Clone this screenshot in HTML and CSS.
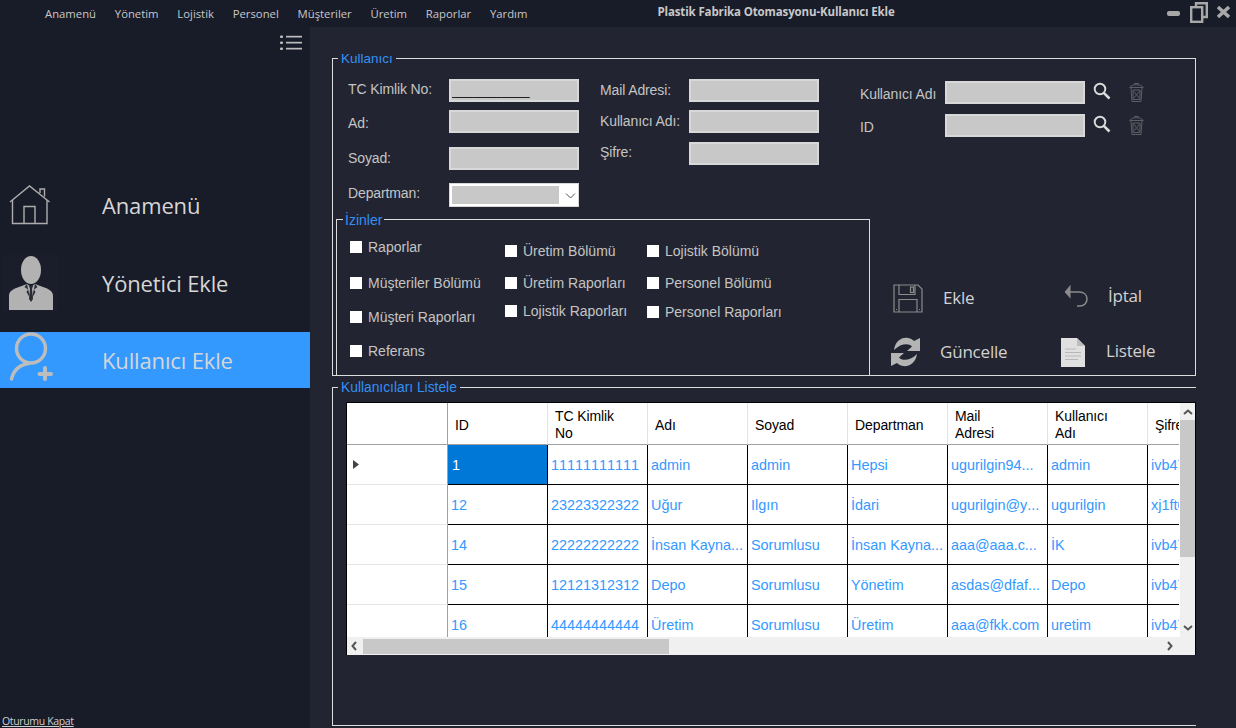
FILE: index.html
```html
<!DOCTYPE html>
<html lang="tr">
<head>
<meta charset="utf-8">
<title>Plastik Fabrika Otomasyonu-Kullanıcı Ekle</title>
<link rel="stylesheet" href="styles.css">
</head>
<body>
<div class="app">
  <header class="topbar">
    <nav class="menu">
      <span>Anamenü</span><span>Yönetim</span><span>Lojistik</span><span>Personel</span><span>Müşteriler</span><span>Üretim</span><span>Raporlar</span><span>Yardım</span>
    </nav>
    <div class="title">Plastik Fabrika Otomasyonu-Kullanıcı Ekle</div>
    <div class="win-controls">
      <svg width="13" height="5" viewBox="0 0 13 5"><rect x="0" y="0" width="13" height="5" rx="2" fill="#a8a8a8"/></svg>
      <svg class="win-restore" width="18" height="21" viewBox="0 0 18 21" fill="none" stroke="#a8a8a8" stroke-width="2.4"><path d="M6 4V1.2H16.8V15H12.5"/><rect x="1.2" y="5.2" width="11" height="14.6"/></svg>
      <svg class="win-close" width="13" height="12" viewBox="0 0 13 12" stroke="#a8a8a8" stroke-width="3.4"><path d="M1 1L12 11M12 1L1 11"/></svg>
    </div>
  </header>
  <div class="body-row">
    <aside class="sidebar">
      <div class="side-top">
        <svg width="22" height="15" viewBox="0 0 22 15" fill="#bdbdbd"><rect x="0" y="0.5" width="3" height="2.5" rx="1"/><rect x="6" y="0.8" width="16" height="1.7"/><rect x="0" y="6.5" width="3" height="2.5" rx="1"/><rect x="6" y="6.8" width="16" height="1.7"/><rect x="0" y="12.5" width="3" height="2.5" rx="1"/><rect x="6" y="12.8" width="16" height="1.7"/></svg>
      </div>
      <nav class="side-nav">
        <a class="side-item">
          <span class="side-icon">
            <svg class="ico-home" width="42" height="40" viewBox="0 0 42 40" fill="none" stroke="#adadad" stroke-width="1.4"><path d="M1 17L20.5 1L40.5 17"/><path d="M3.5 15V38.5H38V15"/><path d="M15 38.5V21.5H26V38.5"/><path d="M31 8V4H35.5V11.5"/></svg>
          </span>
          <span class="side-label">Anamenü</span>
        </a>
        <a class="side-item item-manager">
          <span class="side-icon">
            <svg class="ico-man" width="56" height="56" viewBox="0 0 56 56"><rect width="56" height="56" fill="#1b1e2a"/><ellipse cx="28" cy="15" rx="10" ry="14" fill="#b2b2b2"/><path d="M6 55V41C6 36 10 34 16 32L24 29L28 32L32 29L40 32C46 34 50 36 50 41V55Z" fill="#b2b2b2"/><path d="M24 29L27 43L23.5 37L25 34.5L21.5 32ZM32 29L29 43L32.5 37L31 34.5L34.5 32Z" fill="#2a2c35"/><path d="M26 31H30L29 34L30 44L28 47L26 44L27 34Z" fill="#2a2c35"/></svg>
          </span>
          <span class="side-label">Yönetici Ekle</span>
        </a>
        <a class="side-item active">
          <span class="side-icon">
            <svg class="ico-add" width="56" height="56" viewBox="0 0 56 56" fill="none" stroke="#bdbdbd" stroke-linecap="round"><circle cx="31" cy="16.500" r="14.500" stroke-width="3.400"/><path d="M11.500 47C14 37 20 32.500 29 31.500" stroke-width="3.400"/><path d="M45 36V47M39.500 42H51" stroke-width="4"/></svg>
          </span>
          <span class="side-label">Kullanıcı Ekle</span>
        </a>
      </nav>
      <a class="logout">Oturumu Kapat</a>
    </aside>
    <main class="main">
      <fieldset class="box box-user">
        <legend>Kullanıcı</legend>
        <div class="form-top">
          <div class="col col-a">
            <div class="field"><label class="lbl lbl-a up1">TC Kimlik No:</label><input class="inp" value="___________"></div>
            <div class="field f-8"><label class="lbl lbl-a down1">Ad:</label><input class="inp"></div>
            <div class="field f-14"><label class="lbl lbl-a up-s">Soyad:</label><input class="inp"></div>
            <div class="field f-13 field-select"><label class="lbl lbl-a up3">Departman:</label>
              <div class="combo"><span class="combo-fill"></span><svg width="11" height="6" viewBox="0 0 11 6" fill="none" stroke="#555" stroke-width="1"><path d="M1 .5L5.500 5L10 .5"/></svg></div>
            </div>
          </div>
          <div class="col col-b">
            <div class="field"><label class="lbl lbl-b up-s">Mail Adresi:</label><input class="inp"></div>
            <div class="field f-8"><label class="lbl lbl-b up-xs">Kullanıcı Adı:</label><input class="inp"></div>
            <div class="field f-9"><label class="lbl lbl-b up2">Şifre:</label><input class="inp"></div>
          </div>
          <div class="col col-c">
            <div class="field"><label class="lbl lbl-c">Kullanıcı Adı</label><input class="inp inp-wide">
              <svg class="ico-search" width="18" height="18" viewBox="0 0 18 18" fill="none" stroke="#dcdcdc"><circle cx="7" cy="7" r="5.300" stroke-width="1.900"/><path d="M10.800 10.800L16.500 16.500" stroke-width="2.600"/></svg>
              <svg class="ico-trash" width="15" height="19" viewBox="0 0 15 19" fill="none" stroke="#5c5e66"><path d="M.5 4.500H14.500M1.500 4C2 1 13 1 13.500 4"/><path d="M5.500 1.500V.5H9.500V1.500"/><path d="M2 5L3 18.500H12L13 5"/><path d="M4.500 8L10.500 15.500M10.500 8L4.500 15.500M4 7H11V16.500H4Z"/></svg>
            </div>
            <div class="field f-10"><label class="lbl lbl-c">ID</label><input class="inp inp-wide">
              <svg class="ico-search" width="18" height="18" viewBox="0 0 18 18" fill="none" stroke="#dcdcdc"><circle cx="7" cy="7" r="5.300" stroke-width="1.900"/><path d="M10.800 10.800L16.500 16.500" stroke-width="2.600"/></svg>
              <svg class="ico-trash" width="15" height="19" viewBox="0 0 15 19" fill="none" stroke="#5c5e66"><path d="M.5 4.500H14.500M1.500 4C2 1 13 1 13.500 4"/><path d="M5.500 1.500V.5H9.500V1.500"/><path d="M2 5L3 18.500H12L13 5"/><path d="M4.500 8L10.500 15.500M10.500 8L4.500 15.500M4 7H11V16.500H4Z"/></svg>
            </div>
          </div>
        </div>
        <div class="form-bottom">
          <fieldset class="box box-perm">
            <legend>İzinler</legend>
            <div class="perm-cols">
              <div class="perm-col perm-1">
                <div class="chk"><i></i><span>Raporlar</span></div>
                <div class="chk"><i></i><span>Müşteriler Bölümü</span></div>
                <div class="chk"><i></i><span>Müşteri Raporları</span></div>
                <div class="chk"><i></i><span>Referans</span></div>
              </div>
              <div class="perm-col perm-2">
                <div class="chk"><i></i><span>Üretim Bölümü</span></div>
                <div class="chk chk-20"><i></i><span>Üretim Raporları</span></div>
                <div class="chk chk-16"><i></i><span>Lojistik Raporları</span></div>
              </div>
              <div class="perm-col perm-3">
                <div class="chk"><i></i><span>Lojistik Bölümü</span></div>
                <div class="chk chk-20"><i></i><span>Personel Bölümü</span></div>
                <div class="chk chk-17"><i></i><span>Personel Raporları</span></div>
              </div>
            </div>
          </fieldset>
          <div class="actions">
            <div class="action">
              <svg class="a-save" width="30" height="29" viewBox="0 0 30 29" fill="none" stroke="#8b8b8b" stroke-width="1.200"><path d="M1 1H25L29 5V28H1Z"/><path d="M6 1V10.500H22V1"/><rect x="17.500" y="3" width="3" height="5.500"/><path d="M6 28V15.500H24V28"/><path d="M3 25.500H4M26 25.500H27"/></svg>
              <span>Ekle</span>
            </div>
            <div class="action act-cancel">
              <svg class="a-back" width="24" height="22" viewBox="0 0 24 22" fill="none" stroke="#8b8b8b" stroke-width="1.500"><path d="M2 7H15C20 7 23 10 23 14C23 18 20 21 16 21H13"/><path d="M6.500 .5L1 7L6.500 13" fill="#8b8b8b" stroke-width="1"/></svg>
              <span>İptal</span>
            </div>
            <div class="action">
              <svg class="a-sync" width="31" height="32" viewBox="0 0 31 32" fill="#b4b4b4"><path d="M4 14C5 6 11 1 18 2C21 2.500 23 4 24 5L30 2L30 15L17 15L22 10.500C19 7 11 7 4 14Z"/><path d="M27 18C26 26 20 31 13 30C10 29.500 8 28 7 27L1 30L1 17L14 17L9 21.500C12 25 20 25 27 18Z"/></svg>
              <span>Güncelle</span>
            </div>
            <div class="action act-list">
              <svg class="a-doc" width="24" height="29" viewBox="0 0 24 29"><path d="M0 0H16L24 8V29H0Z" fill="#e0e0e0"/><path d="M16 0L24 8H16Z" fill="#bdbdbd"/><path d="M4 11H15M4 14.500H20M4 18H20M4 21.500H17" stroke="#b8b8b8" stroke-width="1.200"/></svg>
              <span>Listele</span>
            </div>
          </div>
        </div>
      </fieldset>
      <fieldset class="box box-list">
        <legend>Kullanıcıları Listele</legend>
        <div class="grid-frame">
          <div class="grid-upper">
            <div class="grid-view">
              <table class="grid">
                <thead>
                  <tr><th class="rh"></th><th>ID</th><th>TC Kimlik<br>No</th><th>Adı</th><th>Soyad</th><th>Departman</th><th>Mail<br>Adresi</th><th>Kullanıcı<br>Adı</th><th>Şifre</th></tr>
                </thead>
                <tbody>
                  <tr><td class="rh"><svg class="row-mark" width="6" height="9" viewBox="0 0 6 9"><path d="M0 0L6 4.500L0 9Z" fill="#444"/></svg></td><td class="sel">1</td><td>11111111111</td><td>admin</td><td>admin</td><td>Hepsi</td><td>ugurilgin94...</td><td>admin</td><td>ivb47f0</td></tr>
                  <tr><td class="rh"></td><td>12</td><td>23223322322</td><td>Uğur</td><td>Ilgın</td><td>İdari</td><td>ugurilgin@y...</td><td>ugurilgin</td><td>xj1ft0</td></tr>
                  <tr><td class="rh"></td><td>14</td><td>22222222222</td><td>İnsan Kayna...</td><td>Sorumlusu</td><td>İnsan Kayna...</td><td>aaa@aaa.c...</td><td>İK</td><td>ivb47f0</td></tr>
                  <tr><td class="rh"></td><td>15</td><td>12121312312</td><td>Depo</td><td>Sorumlusu</td><td>Yönetim</td><td>asdas@dfaf...</td><td>Depo</td><td>ivb47f0</td></tr>
                  <tr><td class="rh"></td><td>16</td><td>44444444444</td><td>Üretim</td><td>Sorumlusu</td><td>Üretim</td><td>aaa@fkk.com</td><td>uretim</td><td>ivb47f0</td></tr>
                </tbody>
              </table>
            </div>
            <div class="vscroll">
              <svg width="10" height="6" viewBox="0 0 10 6" fill="none" stroke="#555" stroke-width="2"><path d="M1 5L5 1.500L9 5"/></svg>
              <div class="vthumb"></div>
              <svg class="v-down" width="10" height="6" viewBox="0 0 10 6" fill="none" stroke="#555" stroke-width="2"><path d="M1 1L5 4.500L9 1"/></svg>
            </div>
          </div>
          <div class="hscroll">
            <svg width="6" height="10" viewBox="0 0 6 10" fill="none" stroke="#555" stroke-width="2"><path d="M5 1L1.500 5L5 9"/></svg>
            <div class="hthumb"></div>
            <svg class="h-right" width="6" height="10" viewBox="0 0 6 10" fill="none" stroke="#555" stroke-width="2"><path d="M1 1L4.500 5L1 9"/></svg>
          </div>
        </div>
      </fieldset>
    </main>
  </div>
</div>
</body>
</html>
```
FILE: styles.css
```css
* { box-sizing: border-box; }
html, body { margin: 0; height: 100%; }
body { background: #222431; font-family: "Liberation Sans", Arial, sans-serif; overflow: hidden; }
.app { width: 1236px; height: 728px; display: flex; flex-direction: column; }

/* top bar */
.topbar { height: 27px; flex: none; background: #181b28; display: flex; align-items: center; padding-left: 45px; color: #c8c8c8; }
.menu { display: flex; gap: 18.8px; font: 11.3px/14px "Open Sans", sans-serif; }
.title { margin-left: 130px; font: bold 11.5px/14px "Open Sans", sans-serif; letter-spacing: -.13px; white-space: nowrap; margin-top: -3px; }
.win-controls { margin-left: auto; display: flex; align-items: center; padding-right: 6px; height: 27px; }
.win-restore { margin: 0 9px 3px 10px; }
.win-close { margin-bottom: 3px; }

/* sidebar */
.body-row { flex: 1; display: flex; min-height: 0; }
.sidebar { width: 310px; flex: none; background: #181b28; display: flex; flex-direction: column; }
.side-top { display: flex; justify-content: flex-end; padding: 8px 8px 0 0; height: 151px; }
.side-nav { display: flex; flex-direction: column; gap: 21px; }
.side-item { height: 56px; display: flex; align-items: center; color: #d6d6d6; font: 22px/28px "Open Sans", sans-serif; letter-spacing: -.15px; }
.side-item.active { background: #3399ff; }
.side-label { margin-bottom: 2px; }
.item-manager .side-label { margin-top: 1px; }
.active .side-label { margin-top: 2px; }
.side-icon { width: 102px; flex: none; height: 56px; display: flex; margin-bottom: 0; }
.ico-home { margin: 7px 0 0 9px; }
.ico-man { margin: 0 0 0 3px; }
.ico-add { margin: 0; }
.logout { margin-top: auto; padding-left: 2px; color: #cfcfcf; font: 10.5px/13px "Open Sans", sans-serif; letter-spacing: -.35px; text-decoration: underline; }

/* main */
.main { flex: 1; min-width: 0; padding: 23px 40px 0 22px; }
.box { margin: 0; padding: 0; min-width: 0; border: 1px solid #dcdcdc; }
.box legend { padding: 1px 3px 0; margin-left: 5px; font-size: 13.5px; line-height: 16px; color: #3391f5; }
.box-user { height: 326px; }
.box-list { height: 347px; margin-top: 3px; border-right: 0; }
.box-list legend { font-size: 13.8px; }

.form-top { height: 144px; display: flex; padding: 12px 0 0 15px; }
.col { display: flex; flex-direction: column; }
.col-b { margin-left: 21px; }
.col-c { margin-left: 41px; padding-top: 2px; }
.field { display: flex; align-items: center; height: 23px; }
.field-select { height: 24px; }
.f-8 { margin-top: 8px; }
.f-9 { margin-top: 9px; }
.f-10 { margin-top: 10px; }
.f-13 { margin-top: 13px; }
.f-14 { margin-top: 14px; }
.lbl { color: #c4c4c4; font-size: 14px; line-height: 16px; letter-spacing: -.12px; white-space: nowrap; }
.lbl-a { width: 101px; }
.lbl-b { width: 89px; }
.lbl-c { width: 85px; margin-top: 3px; }
.up1 { margin-bottom: 3px; }
.up2 { margin-bottom: 4px; }
.up3 { margin-bottom: 4px; }
.up-s { margin-bottom: 2px; }
.up-xs { margin-bottom: 1px; }
.down1 { margin-top: 2px; }
.inp { width: 130px; height: 23px; padding: 0 0 0 1px; border: 2px solid #d8d8d8; border-radius: 0; background: #c8c8c8; color: #000; font: 12.7px/14px "Liberation Sans", sans-serif; outline: 0; }
.inp-wide { width: 140px; }
.ico-search { margin: 0 0 3px 8px; }
.ico-trash { margin-left: 18px; }
.combo { width: 130px; height: 24px; background: #fff; border: 1px solid #d8d8d8; padding: 2px; display: flex; align-items: center; }
.combo-fill { width: 107px; height: 18px; background: #c8c8c8; }
.combo svg { margin-left: 6px; margin-top: 2px; }

.form-bottom { display: flex; align-items: flex-start; }
.box-perm { width: 534px; height: 165px; margin-left: 3px; flex: none; }
.box-perm legend { margin-left: 6px; padding: 1px 2px 0; font-size: 14px; }
.perm-cols { display: flex; }
.perm-col { display: flex; flex-direction: column; }
.perm-1 { width: 155px; margin-left: 13px; padding-top: 13px; gap: 22px; }
.perm-1 .chk:nth-child(2) { margin-top: 2px; }
.perm-2 { width: 142px; padding-top: 17px; }
.perm-3 { padding-top: 17px; }
.chk { height: 12px; display: flex; align-items: center; color: #c4c4c4; font-size: 14px; line-height: 16px; white-space: nowrap; }
.chk i { width: 12px; height: 12px; background: #fff; margin-right: 6px; flex: none; }
.chk-20 { margin-top: 20px; }
.chk-16 { margin-top: 16px; }
.chk-17 { margin-top: 17px; }

.actions { flex: 1; display: grid; grid-template-columns: 171px 1fr; grid-auto-rows: 54px; padding: 60px 0 0 20px; }
.action { display: flex; align-items: center; color: #d2d2d2; font: 17px/20px "Open Sans", sans-serif; letter-spacing: -.2px; }
.a-save { margin: 0 20px 0 3px; }
.a-back { margin: 0 20px 4px 3px; }
.act-cancel span { margin-bottom: 4px; }
.a-sync { margin-right: 19px; }
.a-doc { margin-right: 21px; }
.act-list span { margin-bottom: 2px; }

/* data grid */
.grid-frame { width: 850px; height: 253px; margin: 6px 0 0 13px; border: 1px solid #000; background: #fff; display: flex; flex-direction: column; }
.grid-upper { height: 234px; display: flex; flex: none; }
.grid-view { width: 832px; overflow: hidden; }
.grid { table-layout: fixed; width: 901px; border-collapse: separate; border-spacing: 0; font-size: 14.4px; font-kerning: none; }
.grid th { width: 100px; height: 42px; padding: 3px 0 0 7px; text-align: left; font-weight: 400; font-size: 14px; line-height: 17px; letter-spacing: -.1px; font-kerning: normal; color: #000; border-right: 1px solid #e3e3e3; border-bottom: 1px solid #a0a0a0; white-space: nowrap; overflow: hidden; }
.grid td { height: 40px; padding: 1px 0 0 3px; color: #3399ff; border-right: 1px solid #000; border-bottom: 1px solid #000; white-space: nowrap; overflow: hidden; }
.grid .rh { width: 101px; padding: 0 0 0 6px; border-right: 1px solid #a0a0a0; }
.grid td.rh { border-bottom: 1px solid #e5e5e5; }
.grid thead .rh { border-bottom: 1px solid #a0a0a0; }
.grid td.sel { background: #0078d7; color: #fff; padding-left: 4px; }
.row-mark { display: block; }

.vscroll { width: 16px; flex: none; background: #f0f0f0; display: flex; flex-direction: column; align-items: center; padding-top: 6px; border-left: 1px solid #fff; }
.vthumb { width: 15px; height: 137px; margin-top: 5px; background: #c8c8c8; }
.v-down { margin-top: auto; margin-bottom: 6px; }
.hscroll { height: 18px; flex: none; background: #f0f0f0; display: flex; align-items: center; padding: 0 22px 0 4px; }
.hthumb { width: 306px; height: 15px; margin-left: 6px; background: #c8c8c8; }
.h-right { margin-left: auto; }
```
